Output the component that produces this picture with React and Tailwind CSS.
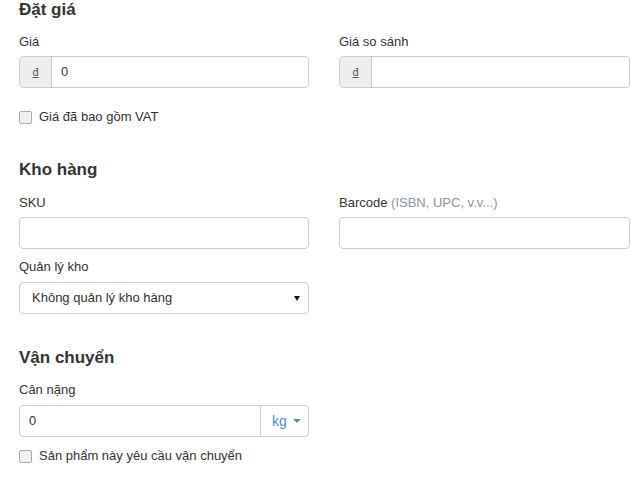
import { useState } from "react";

function Checkbox({ label, className = "" }) {
  return (
    <label className={"flex items-center h-[18px] " + className}>
      <span className="w-[13px] h-[13px] border border-[#a9a9a9] rounded-[2px] bg-[#f1f1f1]" />
      <span className="ml-[7px] text-[13px] text-[#333]">{label}</span>
    </label>
  );
}

function Label({ children, className = "" }) {
  return (
    <div className={"h-[18px] leading-[18px] text-[13px] text-[#333] " + className}>
      {children}
    </div>
  );
}

function Heading({ children, className = "" }) {
  return (
    <h2 className={"h-[20px] leading-[20px] text-[17px] font-bold text-[#333] " + className}>
      {children}
    </h2>
  );
}

export default function App() {
  const [price, setPrice] = useState("0");
  const [weight, setWeight] = useState("0");

  return (
    <div
      className="w-[641px] h-[489px] bg-white pl-[19px] pr-[11px] overflow-hidden"
      style={{ fontFamily: '"Liberation Sans", Arial, sans-serif' }}
    >
      <Heading>Đặt giá</Heading>
      <div className="grid grid-cols-[290px_291px] gap-x-[30px] mt-[13px]">
        <div>
          <Label>Giá</Label>
          <div className="mt-[5px] flex h-[32px] border border-[#ccc] rounded-[4px] overflow-hidden">
            <span className="w-[32px] bg-[#eee] border-r border-[#ccc] flex items-center justify-center text-[11px] text-[#555] underline">
              đ
            </span>
            <input
              value={price}
              onChange={(e) => setPrice(e.target.value)}
              className="flex-1 px-[9px] text-[13px] text-[#333] outline-none"
            />
          </div>
        </div>
        <div>
          <Label>Giá so sánh</Label>
          <div className="mt-[5px] flex h-[32px] border border-[#ccc] rounded-[4px] overflow-hidden">
            <span className="w-[32px] bg-[#eee] border-r border-[#ccc] flex items-center justify-center text-[11px] text-[#555] underline">
              đ
            </span>
            <input className="flex-1 px-[9px] text-[13px] outline-none" />
          </div>
        </div>
      </div>
      <Checkbox label="Giá đã bao gồm VAT" className="mt-[20px]" />

      <Heading className="mt-[34px]">Kho hàng</Heading>
      <div className="grid grid-cols-[290px_291px] gap-x-[30px] mt-[14px]">
        <div>
          <Label>SKU</Label>
          <input className="mt-[5px] block w-full h-[32px] border border-[#ccc] rounded-[4px] px-[12px] text-[13px] outline-none" />
        </div>
        <div>
          <Label>
            Barcode <span className="text-[#8a95a3]">(ISBN, UPC, v.v...)</span>
          </Label>
          <input className="mt-[5px] block w-full h-[32px] border border-[#ccc] rounded-[4px] px-[12px] text-[13px] outline-none" />
        </div>
      </div>
      <div className="grid grid-cols-[290px_291px] gap-x-[30px] mt-[9px]">
        <div>
          <Label>Quản lý kho</Label>
          <div className="mt-[6px] h-[32px] border border-[#ccc] rounded-[4px] pl-[12px] pr-[8px] flex items-center justify-between text-[13px] text-[#333]">
            <span>Không quản lý kho hàng</span>
            <span className="w-0 h-0 border-l-[3px] border-r-[3px] border-t-[5px] border-l-transparent border-r-transparent border-t-[#111]" />
          </div>
        </div>
      </div>

      <Heading className="mt-[34px]">Vận chuyển</Heading>
      <div className="grid grid-cols-[290px_291px] gap-x-[30px] mt-[13px]">
        <div>
          <Label>Cân nặng</Label>
          <div className="mt-[6px] flex h-[32px] border border-[#ccc] rounded-[4px] overflow-hidden">
            <input
              value={weight}
              onChange={(e) => setWeight(e.target.value)}
              className="flex-1 min-w-0 px-[9px] text-[13px] text-[#333] outline-none"
            />
            <span className="w-[48px] border-l border-[#ccc] flex items-center pl-[11px] text-[14px] text-[#4a90c8]">
              kg
              <span className="ml-[6px] w-0 h-0 border-l-[4px] border-r-[4px] border-t-[4px] border-l-transparent border-r-transparent border-t-[#4a90c8]" />
            </span>
          </div>
        </div>
      </div>
      <Checkbox label="Sản phẩm này yêu cầu vận chuyển" className="mt-[10px]" />
    </div>
  );
}
